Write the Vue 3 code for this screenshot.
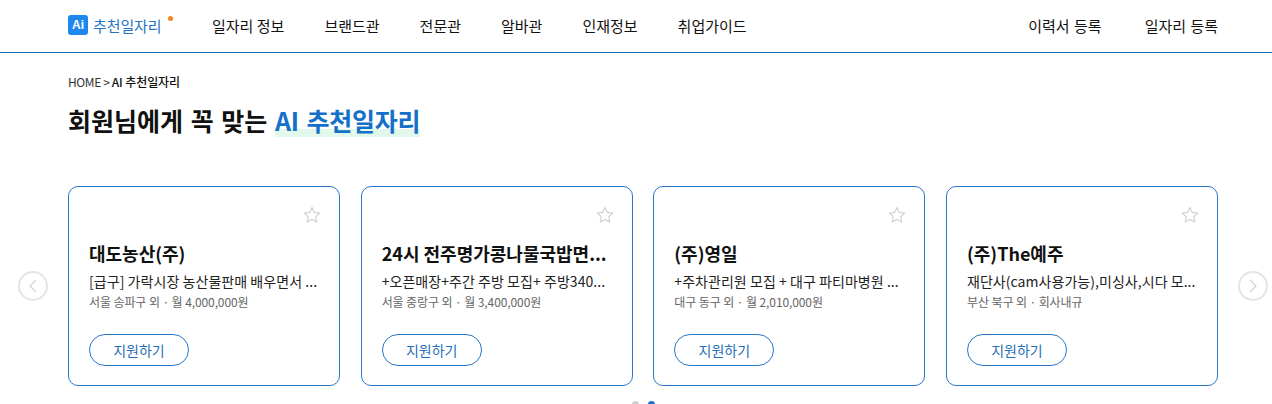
<script setup>
const nav = ['일자리 정보', '브랜드관', '전문관', '알바관', '인재정보', '취업가이드']
const jobs = [
  { company: '대도농산(주)', desc: '[급구] 가락시장 농산물판매 배우면서 ...', meta: '서울 송파구 외 · 월 4,000,000원' },
  { company: '24시 전주명가콩나물국밥면...', desc: '+오픈매장+주간 주방 모집+ 주방340...', meta: '서울 중랑구 외 · 월 3,400,000원' },
  { company: '(주)영일', desc: '+주차관리원 모집 + 대구 파티마병원 ...', meta: '대구 동구 외 · 월 2,010,000원' },
  { company: '(주)The예주', desc: '재단사(cam사용가능),미싱사,시다 모...', meta: '부산 북구 외 · 회사내규' }
]
</script>

<template>
  <div class="page">
    <header class="header">
      <div class="brand">
        <span class="logo">Ai</span>
        <span class="brand-name">추천일자리</span>
        <span class="dot"></span>
      </div>
      <nav class="nav">
        <a v-for="item in nav" :key="item">{{ item }}</a>
      </nav>
      <div class="actions">
        <a>이력서 등록</a>
        <a>일자리 등록</a>
      </div>
    </header>

    <main class="main">
      <div class="crumb">HOME &gt; <b>AI 추천일자리</b></div>
      <h1 class="title">회원님에게 꼭 맞는 <span class="hl">AI 추천일자리</span></h1>

      <section class="cards">
        <article v-for="job in jobs" :key="job.company" class="card">
          <svg class="star" width="18" height="18" viewBox="0 0 18 18" aria-hidden="true">
            <path d="M9 1.4l2.3 5 5.4.6-4 3.7 1.100 5.400L9 13.400l-4.800 2.700 1.100-5.400-4-3.700 5.400-.6z" fill="none" stroke="#cfcfcf" stroke-width="1.100" stroke-linejoin="round" />
          </svg>
          <h2 class="company">{{ job.company }}</h2>
          <p class="desc">{{ job.desc }}</p>
          <p class="meta">{{ job.meta }}</p>
          <button class="apply" type="button">지원하기</button>
        </article>
      </section>
    </main>

    <button class="arrow prev" type="button" aria-label="이전">
      <svg width="10" height="14" viewBox="0 0 10 14"><path d="M8 1L2 7l6 6" fill="none" stroke="#d4d4d4" stroke-width="1.300" /></svg>
    </button>
    <button class="arrow next" type="button" aria-label="다음">
      <svg width="10" height="14" viewBox="0 0 10 14"><path d="M2 1l6 6-6 6" fill="none" stroke="#d4d4d4" stroke-width="1.300" /></svg>
    </button>

    <div class="dots"><i></i><i class="on"></i></div>
  </div>
</template>

<style>
html, body { margin: 0; overflow: hidden; background: #fff; }
</style>

<style scoped>
.page {
  position: relative;
  width: 1272px;
  height: 404px;
  overflow: hidden;
  background: #fff;
  color: #111;
  font-family: "Noto Sans CJK KR", "Noto Sans", sans-serif;
}
.header {
  box-sizing: border-box;
  height: 53px;
  padding: 0 54px 2px 68px;
  display: flex;
  align-items: center;
  border-bottom: 1px solid #1a6fb5;
  font-size: 15px;
  letter-spacing: 0;
}
.brand { display: flex; align-items: center; width: 144px; position: relative; }
.logo {
  width: 20px;
  height: 20px;
  border-radius: 3px;
  background: #1e88f0;
  color: #fff;
  font: 700 12px/20px "Liberation Sans", sans-serif;
  text-align: center;
}
.brand-name { margin-left: 5px; color: #1f74c4; letter-spacing: -0.1px; }
.dot {
  position: absolute;
  left: 100px;
  top: 1px;
  width: 5px;
  height: 5px;
  border-radius: 50%;
  background: #f58220;
}
.nav { display: flex; gap: 40px; }
.actions { margin-left: auto; display: flex; gap: 43px; word-spacing: 1px; }
.main { padding: 20px 54px 0 68px; }
.crumb { font-size: 12px; line-height: 18px; letter-spacing: -0.4px; color: #333; }
.crumb b { font-weight: 500; color: #111; letter-spacing: -0.1px; }
.title {
  margin: 11px 0 0;
  font-size: 25px;
  line-height: 36px;
  font-weight: 700;
  letter-spacing: 0;
  word-spacing: 2px;
  color: #111;
}
.hl {
  color: #1470c8;
  letter-spacing: -0.2px;
  background: linear-gradient(transparent 27px, #e2f8ea 27px, #e2f8ea 35px, transparent 35px);
}
.cards {
  margin-top: 48px;
  display: grid;
  grid-template-columns: repeat(4, 272px);
  column-gap: 20.67px;
}
.card {
  box-sizing: border-box;
  position: relative;
  height: 200px;
  padding: 53px 20px 0;
  border: 1px solid #2a78c8;
  border-radius: 10px;
  background: #fff;
}
.star { position: absolute; top: 19px; right: 18px; }
.company {
  margin: 0;
  font-size: 18px;
  line-height: 26px;
  font-weight: 700;
  color: #111;
  white-space: nowrap;
}
.desc {
  margin: 5px 0 0;
  font-size: 14px;
  line-height: 20px;
  letter-spacing: 0.05px;
  color: #222;
  white-space: nowrap;
}
.meta {
  margin: 2px 0 0;
  font-size: 12px;
  line-height: 18px;
  letter-spacing: -0.1px;
  color: #666;
  white-space: nowrap;
}
.apply {
  display: block;
  margin-top: 23px;
  width: 100px;
  height: 32px;
  padding: 0;
  border: 1px solid #2a78c8;
  border-radius: 16px;
  background: #fff;
  color: #1f6fb8;
  font: 400 14px/30px "Noto Sans CJK KR", sans-serif;
}
.arrow {
  position: absolute;
  top: 271px;
  width: 30px;
  height: 30px;
  padding: 0;
  display: flex;
  align-items: center;
  justify-content: center;
  border: 2px solid #e4e4e4;
  border-radius: 50%;
  background: #fff;
}
.prev { left: 18px; }
.next { left: 1238px; }
.dots {
  position: absolute;
  top: 401px;
  left: 632px;
  display: flex;
  gap: 9px;
}
.dots i { width: 7px; height: 7px; border-radius: 50%; background: #cfcfcf; }
.dots i.on { background: #1a73c9; }
</style>
